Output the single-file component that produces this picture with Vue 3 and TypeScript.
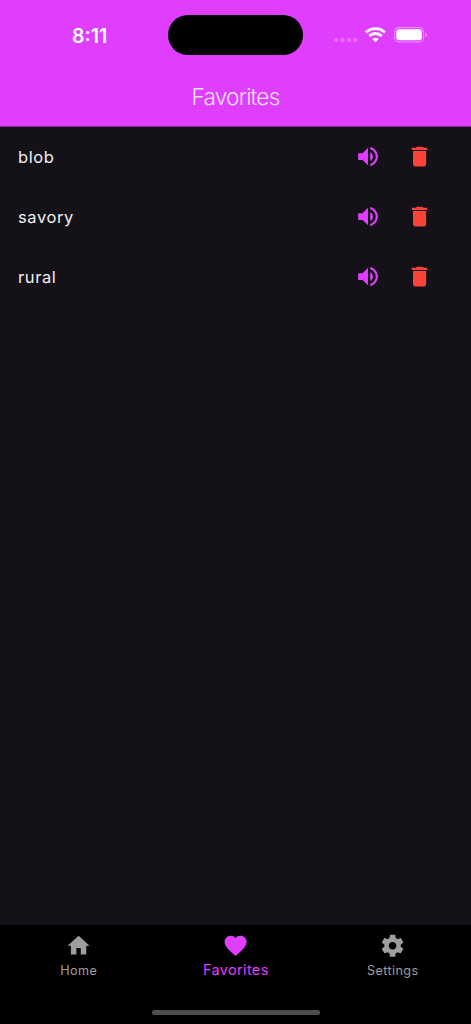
<script setup lang="ts">
interface Tab {
  label: string
  icon: string
  active: boolean
}

const words: string[] = ['blob', 'savory', 'rural']

const tabs: Tab[] = [
  { label: 'Home', icon: 'M10 20v-6h4v6h5v-8h3L12 3 2 12h3v8z', active: false },
  {
    label: 'Favorites',
    icon: 'M12 21.35l-1.45-1.32C5.4 15.36 2 12.28 2 8.5 2 5.42 4.42 3 7.5 3c1.74 0 3.41.81 4.5 2.09C13.09 3.81 14.76 3 16.5 3 19.58 3 22 5.42 22 8.5c0 3.78-3.4 6.86-8.55 11.54L12 21.35z',
    active: true,
  },
  {
    label: 'Settings',
    icon: 'M19.43 12.98c.04-.32.07-.64.07-.98s-.03-.66-.07-.98l2.11-1.65c.19-.15.24-.42.12-.64l-2-3.46c-.12-.22-.39-.3-.61-.22l-2.49 1c-.52-.4-1.08-.73-1.69-.98l-.38-2.65C14.46 2.18 14.25 2 14 2h-4c-.25 0-.46.18-.49.42l-.38 2.65c-.61.25-1.17.59-1.69.98l-2.49-1c-.23-.09-.49 0-.61.22l-2 3.46c-.13.22-.07.49.12.64l2.11 1.65c-.04.32-.07.65-.07.98s.03.66.07.98l-2.11 1.65c-.19.15-.24.42-.12.64l2 3.46c.12.22.39.3.61.22l2.49-1c.52.4 1.08.73 1.69.98l.38 2.65c.03.24.24.42.49.42h4c.25 0 .46-.18.49-.42l.38-2.65c.61-.25 1.17-.59 1.69-.98l2.49 1c.23.09.49 0 .61-.22l2-3.46c.12-.22.07-.49-.12-.64l-2.11-1.65zM12 15.5c-1.93 0-3.5-1.57-3.5-3.5s1.57-3.5 3.5-3.5 3.5 1.57 3.5 3.5-1.57 3.5-3.5 3.5z',
    active: false,
  },
]
</script>

<template>
  <div class="screen">
    <header class="top">
      <div class="status">
        <div class="time">8:11</div>
        <div class="island"></div>
        <div class="indicators">
          <svg class="dots" width="24" height="5" viewBox="0 0 24 5">
            <circle cx="2.2" cy="2" r="2.1" />
            <circle cx="8.6" cy="2" r="2.1" />
            <circle cx="15" cy="2" r="2.1" />
            <circle cx="21.4" cy="2" r="2.1" />
          </svg>
          <svg class="wifi" width="21" height="16" viewBox="0 0 21 16">
            <g fill="none" stroke="#fff" stroke-width="2.9">
              <path d="M1 5.5a13.5 13.5 0 0 1 19 0" />
              <path d="M4.4 9.1a8.6 8.6 0 0 1 12.2 0" />
            </g>
            <path fill="#fff" d="M10.5 15.3 7.3 12.1a4.6 4.6 0 0 1 6.4 0z" />
          </svg>
          <svg class="battery" width="33" height="16" viewBox="0 0 33 16">
            <rect x=".6" y=".6" width="29" height="14.4" rx="4.4" fill="none" stroke="#fff" stroke-opacity=".42" stroke-width="1.1" />
            <rect x="2.3" y="2.3" width="25.6" height="11" rx="3" fill="#fff" />
            <path d="M31.2 5.5c2 .9 2 3.7 0 4.6z" fill="#fff" fill-opacity=".5" />
          </svg>
        </div>
      </div>
      <h1 class="title">Favorites</h1>
    </header>

    <main class="list">
      <div v-for="word in words" :key="word" class="row">
        <span class="word">{{ word }}</span>
        <svg class="icon speak" viewBox="0.1 0.5 24 24">
          <path d="M3 9v6h4l5 5V4L7 9H3zm13.5 3c0-1.77-1.02-3.29-2.5-4.03v8.05c1.48-.73 2.5-2.25 2.5-4.02zM14 3.23v2.06c2.89.86 5 3.54 5 6.71s-2.11 5.85-5 6.71v2.06c4.01-.91 7-4.49 7-8.77s-2.99-7.86-7-8.77z" />
        </svg>
        <svg class="icon remove" viewBox="-0.4 0.5 24 24">
          <path d="M6 19c0 1.1.9 2 2 2h8c1.1 0 2-.9 2-2V7H6v12zM19 4h-3.5l-1-1h-5l-1 1H5v2h14V4z" />
        </svg>
      </div>
    </main>

    <nav class="tabs">
      <div v-for="tab in tabs" :key="tab.label" class="tab" :class="{ active: tab.active }">
        <svg class="icon" viewBox="-0.4 0.4 24 24"><path :d="tab.icon" /></svg>
        <span class="label">{{ tab.label }}</span>
      </div>
      <div class="home-bar"></div>
    </nav>
  </div>
</template>

<style>
body {
  margin: 0;
  background: #141218;
}
</style>

<style scoped>
.screen {
  display: flex;
  flex-direction: column;
  width: 471px;
  height: 1024px;
  overflow: hidden;
  background: #141218;
  font-family: Inter, 'Liberation Sans', sans-serif;
}
.top {
  box-sizing: border-box;
  height: 127px;
  flex: none;
  border-bottom: 1px solid #7d2990;
  background: #e03eff;
}
.status {
  display: grid;
  grid-template-columns: 168px 135px 168px;
  height: 70px;
}
.time {
  padding: 24px 0 0 72px;
  font-size: 19.5px;
  line-height: 24px;
  font-weight: 600;
  color: #fff;
}
.island {
  height: 39.5px;
  margin-top: 15px;
  border-radius: 20px;
  background: #000;
}
.indicators {
  display: flex;
  align-items: flex-start;
  padding: 27px 0 0 31px;
}
.dots {
  margin-top: 11px;
  fill: #fff;
  fill-opacity: .25;
}
.wifi {
  margin-left: 7px;
}
.battery {
  margin-left: 8px;
}
.title {
  margin: 12px 0 0;
  text-align: center;
  font-size: 22.7px;
  line-height: 30px;
  font-weight: 350;
  letter-spacing: -.85px;
  color: #e6e0e9;
}
.list {
  flex: 1;
}
.row {
  display: flex;
  align-items: center;
  height: 60px;
  padding: 0 38.4px 0 18px;
}
.word {
  flex: 1;
  font-size: 16.5px;
  line-height: 20px;
  margin-top: -1px;
  letter-spacing: .6px;
  color: #f1eff3;
}
.icon {
  display: block;
  width: 26.3px;
  height: 26.3px;
  fill: currentColor;
}
.speak {
  color: #e03eff;
}
.remove {
  margin-left: 25px;
  color: #fb4337;
}
.tabs {
  position: relative;
  display: flex;
  flex: none;
  height: 99px;
  background: #000;
}
.tab {
  display: flex;
  flex: 1;
  flex-direction: column;
  align-items: center;
  padding-top: 8px;
  color: #9e9e9e;
}
.label {
  margin-top: 2.7px;
  padding-left: .6px;
  font-size: 12.6px;
  line-height: 18px;
  letter-spacing: .4px;
}
.active {
  color: #e03eff;
}
.active .label {
  margin-top: 1.9px;
  font-size: 14.5px;
  letter-spacing: .35px;
}
.home-bar {
  position: absolute;
  bottom: 9px;
  left: 152px;
  width: 168px;
  height: 5.5px;
  border-radius: 3px;
  background: #4d4d4d;
}
</style>
